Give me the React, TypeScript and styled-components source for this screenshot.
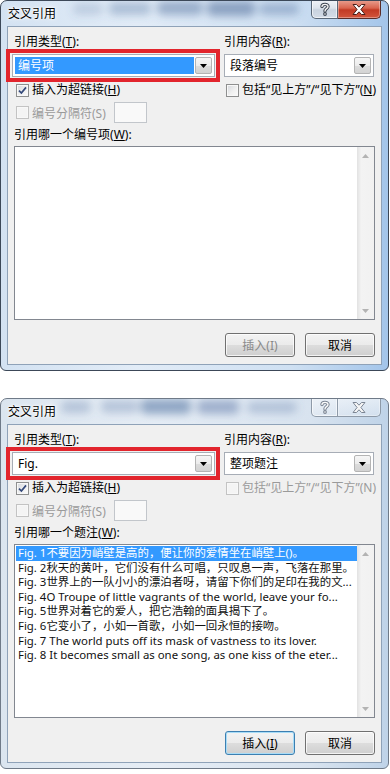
import React from "react";
import styled, { createGlobalStyle, css } from "styled-components";

const UI_FONT = `"Noto Sans", "Noto Sans CJK SC", sans-serif`;

const GlobalStyle = createGlobalStyle`
  html, body {
    margin: 0;
    padding: 0;
    background: #fff;
  }
  body {
    font-family: ${UI_FONT};
  }
`;

const Page = styled.div`
  width: 390px;
  height: 774px;
  overflow: hidden;
  display: flex;
  flex-direction: column;
  gap: 27px;
  font-family: ${UI_FONT};
  font-size: 12px;
  color: #000;
`;

const Window = styled.section<{ $active: boolean }>`
  position: relative;
  box-sizing: border-box;
  width: 389px;
  height: 371px;
  flex: none;
  border: 1px solid ${p => (p.$active ? "#3c4858" : "#6f7a88")};
  border-radius: 7px 7px 6px 6px;
  background: ${p =>
    p.$active
      ? "linear-gradient(90deg, #d3e2f2 0%, #e2ecf7 35%, #cfe0f2 75%, #a3c5ea 100%)"
      : "linear-gradient(90deg, #dbe5ef 0%, #e6edf5 40%, #d8e3ef 80%, #bfd3e8 100%)"};
  display: flex;
  flex-direction: column;
  padding: 0 6px 5px;
  overflow: hidden;
`;

const TitleBar = styled.header`
  position: relative;
  height: 25px;
  flex: none;
  display: flex;
  align-items: flex-start;
`;

const GlassSvg = styled.svg`
  position: absolute;
  left: -6px;
  top: -1px;
  pointer-events: none;
`;

const Title = styled.h1`
  position: relative;
  margin: 0;
  padding: 6px 0 0 1px;
  font-size: 12px;
  font-weight: normal;
  line-height: 14px;
  text-shadow: 0 0 6px #fff, 0 0 3px #fff, 0 0 2px #fff;
`;

const Caption = styled.div`
  position: relative;
  margin: -1px 1px 0 auto;
  display: flex;
`;

const captionBase = css`
  box-sizing: border-box;
  height: 19px;
  display: flex;
  align-items: center;
  justify-content: center;
`;

const HelpButton = styled.div<{ $active: boolean }>`
  ${captionBase};
  width: 27px;
  border: 1px solid ${p => (p.$active ? "#5a6878" : "#8e9aa8")};
  border-top: none;
  border-radius: 0 0 0 5px;
  background: ${p =>
    p.$active
      ? "linear-gradient(#f1f4f8 0%, #dde4ec 45%, #c9d3df 55%, #d5dde8 100%)"
      : "linear-gradient(rgba(255,255,255,.55), rgba(235,240,246,.4))"};
  box-shadow: inset 0 0 0 1px rgba(255, 255, 255, 0.6);
`;

const CloseButton = styled.div<{ $active: boolean }>`
  ${captionBase};
  width: 43px;
  border: 1px solid ${p => (p.$active ? "#5a2c28" : "#8e9aa8")};
  border-top: none;
  border-left: none;
  border-radius: 0 0 5px 0;
  background: ${p =>
    p.$active
      ? "linear-gradient(#e9a192 0%, #d9644e 45%, #c23a24 55%, #d2553c 100%)"
      : "linear-gradient(rgba(255,255,255,.55), rgba(235,240,246,.4))"};
  box-shadow: inset 0 0 0 1px rgba(255, 255, 255, 0.35);
`;

const Client = styled.div`
  flex: 1;
  box-sizing: border-box;
  background: #f0f0f0;
  border: 1px solid #8fa2b8;
  display: flex;
  flex-direction: column;
  padding: 8px 6px 7px;
`;

const TopArea = styled.div`
  display: flex;
  gap: 8px;
`;

const Column = styled.div<{ $width: number }>`
  width: ${p => p.$width}px;
  display: flex;
  flex-direction: column;
`;

const Label = styled.div`
  line-height: 14px;
  height: 14px;
  white-space: nowrap;
`;

const Key = styled.span<{ $off?: boolean }>`
  text-decoration: ${p => (p.$off ? "none" : "underline")};
  text-underline-offset: 1px;
`;

const RedMark = styled.div`
  margin: 0 -4px 0 -8px;
  padding: 1px 1px 1px 2px;
  border: 4px solid #e2252d;
`;

const Combo = styled.div<{ $gap?: number }>`
  box-sizing: border-box;
  height: 23px;
  margin-top: ${p => p.$gap ?? 0}px;
  border: 1px solid #a7adb6;
  background: #fff;
  display: flex;
  padding: 2px;
  gap: 1px;
`;

const ComboText = styled.div<{ $selected?: boolean }>`
  flex: 1;
  padding-left: 3px;
  line-height: 17px;
  white-space: nowrap;
  background: ${p => (p.$selected ? "#3399ff" : "transparent")};
  color: ${p => (p.$selected ? "#fff" : "#000")};
`;

const DropButton = styled.div`
  box-sizing: border-box;
  width: 17px;
  border: 1px solid #b4b4b4;
  border-radius: 2px;
  background: linear-gradient(#f6f6f6 0%, #ececec 50%, #dcdcdc 51%, #d3d3d3 100%);
  display: flex;
  align-items: center;
  justify-content: center;
`;

const CheckRow = styled.label<{ $top: number; $disabled?: boolean }>`
  margin-top: ${p => p.$top}px;
  height: 14px;
  display: flex;
  align-items: center;
  gap: 3px;
  line-height: 14px;
  white-space: nowrap;
  color: ${p => (p.$disabled ? "#9a9a9a" : "#000")};
`;

const Box = styled.span<{ $disabled?: boolean }>`
  box-sizing: border-box;
  width: 13px;
  height: 13px;
  margin-left: 2px;
  flex: none;
  border: 1px solid ${p => (p.$disabled ? "#c3c3c3" : "#8e8f8f")};
  background: ${p =>
    p.$disabled
      ? "#f4f4f4"
      : "linear-gradient(135deg, #d3d6db 0%, #f0f0f0 55%, #fbfbfb 100%)"};
  box-shadow: inset 0 0 0 1px #f8f8f8;
  display: flex;
  align-items: center;
  justify-content: center;
`;

const SeparatorRow = styled.div`
  margin-top: 5px;
  height: 21px;
  display: flex;
  align-items: center;
  gap: 3px;
  color: #9a9a9a;
  white-space: nowrap;
`;

const SmallInput = styled.div`
  box-sizing: border-box;
  width: 33px;
  height: 21px;
  margin-left: 5px;
  border: 1px solid #c2c6cb;
  background: #f9f9f9;
`;

const ListLabel = styled(Label)`
  margin-top: 5px;
`;

const ListBox = styled.div`
  box-sizing: border-box;
  height: 174px;
  margin-top: 4px;
  border: 1px solid #828790;
  background: #fff;
  display: flex;
`;

const Items = styled.ul`
  flex: 1;
  min-width: 0;
  margin: 0;
  padding: 1px 0 1px 1px;
  list-style: none;
  font-size: 11.4px;
`;

const Item = styled.li<{ $selected?: boolean }>`
  height: 14.6px;
  line-height: 14.6px;
  padding-left: 2px;
  white-space: nowrap;
  overflow: hidden;
  background: ${p => (p.$selected ? "#3399ff" : "transparent")};
  color: ${p => (p.$selected ? "#fff" : "#111")};
`;

const ScrollBar = styled.div`
  width: 17px;
  flex: none;
  display: flex;
  flex-direction: column;
  justify-content: space-between;
  background: linear-gradient(90deg, #e2e2e2 0%, #f3f3f3 25%, #f1f1f1 100%);
`;

const ScrollArrow = styled.div`
  height: 17px;
  display: flex;
  align-items: center;
  justify-content: center;
`;

const ButtonRow = styled.div`
  margin-top: auto;
  display: flex;
  justify-content: flex-end;
  gap: 10px;
`;

const PushButton = styled.button<{ $disabled?: boolean; $default?: boolean }>`
  box-sizing: border-box;
  width: 70px;
  height: 24px;
  padding: 0;
  border: 1px solid ${p => (p.$default ? "#3c7fb1" : "#707070")};
  border-radius: 3px;
  font-family: ${UI_FONT};
  font-size: 12px;
  color: ${p => (p.$disabled ? "#8a8a8a" : "#000")};
  background: linear-gradient(#f3f3f3 0%, #ebebeb 49%, #dddddd 50%, #cfcfcf 100%);
  box-shadow: inset 0 0 0 1px ${p => (p.$default ? "#a8dcf7" : "rgba(255,255,255,.75)")};
`;

function Glass({ active }: { active: boolean }) {
  const id = active ? "blurA" : "blurB";
  const blobs = active
    ? [
        [72, 3, 30, 12, 0.2],
        [108, 2, 42, 13, 0.32],
        [156, 1, 46, 14, 0.42],
        [206, 1, 48, 15, 0.5],
        [258, 3, 40, 12, 0.35],
      ]
    : [
        [60, 3, 30, 12, 0.3],
        [100, 2, 38, 13, 0.3],
        [140, 1, 50, 15, 0.55],
        [196, 2, 42, 14, 0.45],
        [246, 4, 50, 11, 0.3],
      ];
  return (
    <GlassSvg width="389" height="26" viewBox="0 0 389 26">
      <defs>
        <filter id={id} x="-20%" y="-60%" width="140%" height="220%">
          <feGaussianBlur stdDeviation="4.5" />
        </filter>
      </defs>
      <g filter={`url(#${id})`} fill={active ? "#3f5f91" : "#4d6d9f"}>
        {blobs.map(([x, y, w, h, o], i) => (
          <rect key={i} x={x} y={y} width={w} height={h} rx="5" opacity={o} />
        ))}
      </g>
    </GlassSvg>
  );
}

function HelpGlyph({ active }: { active: boolean }) {
  const outer = active ? "#3e4652" : "#7c8694";
  const inner = active ? "#f4f4f4" : "#fbfbfb";
  const q = "M4 4.6 C4 1.8 10 1.6 10 4.6 C10 6.8 7 6.6 7 9";
  return (
    <svg width="14" height="14" viewBox="0 0 14 14">
      <path d={q} fill="none" stroke={outer} strokeWidth="3.4" strokeLinecap="round" />
      <circle cx="7" cy="12" r="1.9" fill={outer} />
      <path d={q} fill="none" stroke={inner} strokeWidth="1.4" strokeLinecap="round" />
      <circle cx="7" cy="12" r="0.8" fill={inner} />
    </svg>
  );
}

function CloseGlyph({ active }: { active: boolean }) {
  return (
    <svg width="14" height="11" viewBox="0 0 14 11">
      <polygon
        points="1,0.5 4.5,0.5 7,3.2 9.5,0.5 13,0.5 8.9,5.5 13,10.5 9.5,10.5 7,7.8 4.5,10.5 1,10.5 5.1,5.5"
        fill={active ? "#fff" : "#f6f6f6"}
        stroke={active ? "#4a1f1a" : "#7c8694"}
        strokeWidth="1"
        strokeLinejoin="round"
      />
    </svg>
  );
}

function DownTriangle({ color = "#000" }: { color?: string }) {
  return (
    <svg width="7" height="4" viewBox="0 0 7 4">
      <polygon points="0,0 7,0 3.5,4" fill={color} />
    </svg>
  );
}

function UpTriangle({ color }: { color: string }) {
  return (
    <svg width="7" height="4" viewBox="0 0 7 4">
      <polygon points="0,4 7,4 3.5,0" fill={color} />
    </svg>
  );
}

function CheckBox({ checked, disabled }: { checked?: boolean; disabled?: boolean }) {
  return (
    <Box $disabled={disabled}>
      {checked && (
        <svg width="9" height="9" viewBox="0 0 9 9">
          <path d="M1 4.6 L3.4 7 L8 1.4" fill="none" stroke="#34497a" strokeWidth="1.7" />
        </svg>
      )}
    </Box>
  );
}

type DialogProps = {
  active: boolean;
  refType: string;
  refTypeSelected?: boolean;
  refContent: string;
  includeEnabled: boolean;
  listLabel: string;
  items: string[];
  canInsert: boolean;
};

function CrossRefDialog(props: DialogProps) {
  const { active, refType, refTypeSelected, refContent, includeEnabled, listLabel, items, canInsert } = props;
  return (
    <Window $active={active}>
      <TitleBar>
        <Glass active={active} />
        <Title>交叉引用</Title>
        <Caption>
          <HelpButton $active={active}>
            <HelpGlyph active={active} />
          </HelpButton>
          <CloseButton $active={active}>
            <CloseGlyph active={active} />
          </CloseButton>
        </Caption>
      </TitleBar>
      <Client>
        <TopArea>
          <Column $width={202}>
            <Label>
              引用类型(<Key>T</Key>):
            </Label>
            <RedMark>
              <Combo>
                <ComboText $selected={refTypeSelected}>{refType}</ComboText>
                <DropButton>
                  <DownTriangle />
                </DropButton>
              </Combo>
            </RedMark>
            <CheckRow $top={1}>
              <CheckBox checked />
              <span>
                插入为超链接(<Key>H</Key>)
              </span>
            </CheckRow>
            <SeparatorRow>
              <CheckBox disabled />
              <span>编号分隔符(S)</span>
              <SmallInput />
            </SeparatorRow>
          </Column>
          <Column $width={150}>
            <Label>
              引用内容(<Key>R</Key>):
            </Label>
            <Combo $gap={5}>
              <ComboText>{refContent}</ComboText>
              <DropButton>
                <DownTriangle />
              </DropButton>
            </Combo>
            <CheckRow $top={6} $disabled={!includeEnabled}>
              <CheckBox disabled={!includeEnabled} />
              <span>
                包括“见上方”/“见下方”(<Key $off={!includeEnabled}>N</Key>)
              </span>
            </CheckRow>
          </Column>
        </TopArea>
        <ListLabel>
          {listLabel}(<Key>W</Key>):
        </ListLabel>
        <ListBox>
          <Items>
            {items.map((text, i) => (
              <Item key={i} $selected={i === 0}>
                {text}
              </Item>
            ))}
          </Items>
          <ScrollBar>
            <ScrollArrow>
              <UpTriangle color="#b3b3b3" />
            </ScrollArrow>
            <ScrollArrow>
              <DownTriangle color="#b3b3b3" />
            </ScrollArrow>
          </ScrollBar>
        </ListBox>
        <ButtonRow>
          <PushButton $disabled={!canInsert} $default={canInsert}>
            插入(<Key $off={!canInsert}>I</Key>)
          </PushButton>
          <PushButton>取消</PushButton>
        </ButtonRow>
      </Client>
    </Window>
  );
}

const captions = [
  "Fig. 1不要因为峭壁是高的，便让你的爱情坐在峭壁上()。",
  "Fig. 2秋天的黄叶，它们没有什么可唱，只叹息一声，飞落在那里。",
  "Fig. 3世界上的一队小小的漂泊者呀，请留下你们的足印在我的文...",
  "Fig. 4O Troupe of little vagrants of the world, leave your fo...",
  "Fig. 5世界对着它的爱人，把它浩翰的面具揭下了。",
  "Fig. 6它变小了，小如一首歌，小如一回永恒的接吻。",
  "Fig. 7 The world puts off its mask of vastness to its lover.",
  "Fig. 8 It becomes small as one song, as one kiss of the eter...",
];

export default function App() {
  return (
    <>
      <GlobalStyle />
      <Page>
        <CrossRefDialog
          active
          refType="编号项"
          refTypeSelected
          refContent="段落编号"
          includeEnabled
          listLabel="引用哪一个编号项"
          items={[]}
          canInsert={false}
        />
        <CrossRefDialog
          active={false}
          refType="Fig."
          refContent="整项题注"
          includeEnabled={false}
          listLabel="引用哪一个题注"
          items={captions}
          canInsert
        />
      </Page>
    </>
  );
}
